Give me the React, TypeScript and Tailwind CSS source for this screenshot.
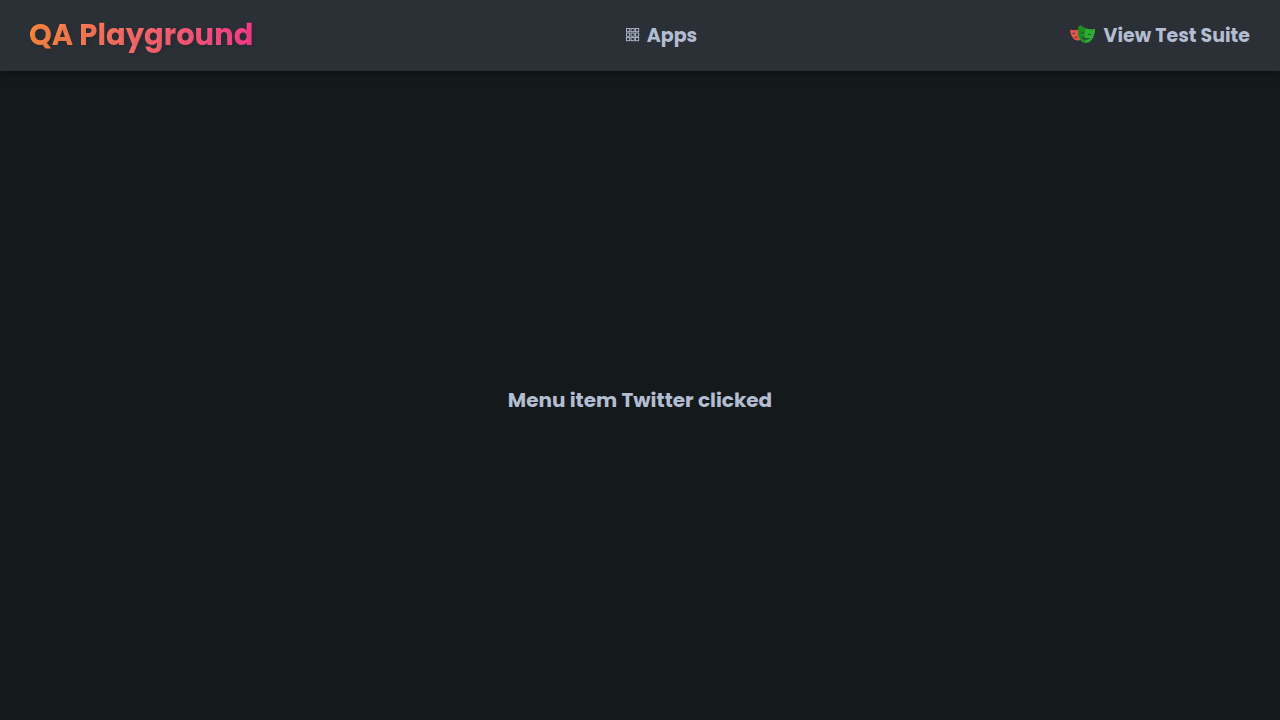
function GridIcon() {
  return (
    <svg width="14" height="14" viewBox="0 0 14 14" fill="none" stroke="#b3bdd1" strokeWidth="0.9" aria-hidden="true">
      {[0, 1, 2].map((row) =>
        [0, 1, 2].map((col) => (
          <rect key={`${row}-${col}`} x={0.5 + col * 4.5} y={0.5 + row * 4.5} width="3.2" height="3.2" />
        )),
      )}
    </svg>
  );
}

function MasksIcon() {
  return (
    <svg width="26" height="20" viewBox="0 0 26 20" aria-hidden="true">
      <path d="M.2 4.6C2.9 5.5 6 5.3 9.2 4.2L10.2 14.4C8.4 16.2 5.6 16 3.4 13.6C1.2 11.2.2 8 .2 4.6Z" fill="#e2574c" />
      <path d="M2 8.7Q3.4 7.2 5 8.1L4.8 9Q3.4 9.3 2 8.7Z" fill="#2d4552" />
      <path d="M3.6 12.4Q5.6 12.4 7.2 10.7L7.2 13.4Q5.2 14 3.6 12.4Z" fill="#9f3936" />
      <path d="M10.5.2C14.6 3.8 19.5 5 25.2 3.7C25 8.8 23.7 12.9 20.8 15.8C18 18.6 14 18.6 11.2 16C8.2 13.2 7.3 8.8 8.6 1.8Q9.7 1.4 10.5.2Z" fill="#2ead33" />
      <path d="M10.5.2C12 1.6 13.8 2.8 15.8 3.4L14.6 10L15.8 17.8C12.6 17.4 10 15.1 8.7 11.8C7.8 9.2 7.8 5.6 8.6 1.8Q9.7 1.4 10.5.2Z" fill="#1d8d22" />
      <path d="M10.7 7.8Q12.6 6.4 14.3 8.4Q12.5 8.9 10.7 7.8ZM17.4 9.3Q19.5 7.9 21.2 9.8Q19.2 10.6 17.4 9.3ZM10.6 11.6Q14.6 14 20.3 12.9Q17.9 15.4 14.5 14.7Q11.6 14 10.6 11.6Z" fill="#24453e" />
    </svg>
  );
}

export default function App() {
  return (
    <div className="flex min-h-screen flex-col bg-[#14191c] font-[Poppins,Inter,sans-serif] text-xl font-bold text-[#b3bdd1]">
      <header className="bg-[#2b2f36] pb-px shadow-[0_3px_8px_-2px_rgba(0,0,0,0.5)]">
        <nav className="flex h-[70px] items-center justify-between pr-[30px] pl-[29px]">
          <a
            href="#home"
            className="bg-linear-to-r from-[#ff8a3c] to-[#ff3c8c] bg-clip-text text-[29px] leading-10 text-transparent text-shadow-[2px_2px_4px_rgba(0,0,0,0.1)]"
          >
            QA Playground
          </a>
          <a href="#apps" className="flex items-center gap-[7px] text-[19px] leading-[29px]">
            <GridIcon />
            Apps
          </a>
          <a href="#tests" className="flex items-center gap-2 text-[19px] leading-[29px]">
            <MasksIcon />
            View Test Suite
          </a>
        </nav>
      </header>
      <main className="flex flex-1 items-center justify-center pt-2">
        <p>Menu item Twitter clicked</p>
      </main>
    </div>
  );
}
